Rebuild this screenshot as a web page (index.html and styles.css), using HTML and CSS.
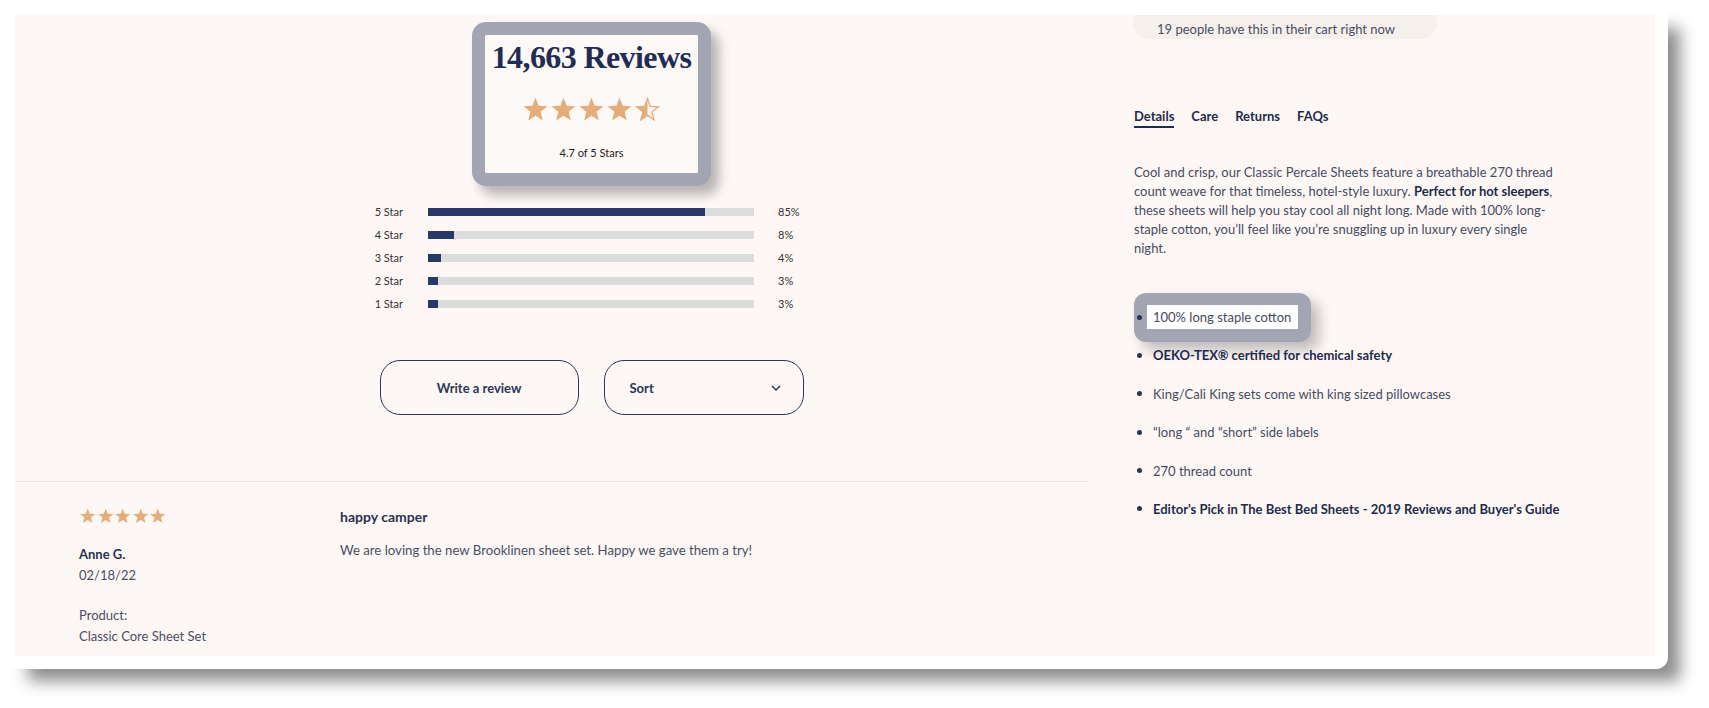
FILE: index.html
```html
<!DOCTYPE html>
<html lang="en">
<head>
<meta charset="utf-8">
<title>Reviews</title>
<link rel="stylesheet" href="styles.css">
</head>
<body>
<svg class="svg-defs" aria-hidden="true">
  <defs>
    <clipPath id="left-half"><rect x="0" y="0" width="12" height="23"/></clipPath>
  </defs>
  <symbol id="star" viewBox="0 0 24 23">
    <polygon points="12,0.6 14.9,8.1 23,8.5 16.7,13.6 18.8,21.7 12,17.2 5.2,21.7 7.3,13.6 1,8.5 9.1,8.1"/>
  </symbol>
  <symbol id="star-half" viewBox="0 0 24 23">
    <polygon points="12,1.4 14.5,8.6 22,9 16.1,13.7 18,21 12,16.9 6,21 7.9,13.7 2,9 9.5,8.6" fill="none" stroke="#e6ad78" stroke-width="1.2"/>
    <polygon clip-path="url(#left-half)" points="12,0.6 14.9,8.1 23,8.5 16.7,13.6 18.8,21.7 12,17.2 5.2,21.7 7.3,13.6 1,8.5 9.1,8.1"/>
  </symbol>
</svg>

<div class="frame">
  <div class="page">
    <section class="reviews">
      <div class="summary">
        <div class="score-box">
          <h2 class="score-title">14,663 Reviews</h2>
          <div class="stars stars-lg">
            <svg><use href="#star"/></svg>
            <svg><use href="#star"/></svg>
            <svg><use href="#star"/></svg>
            <svg><use href="#star"/></svg>
            <svg><use href="#star-half"/></svg>
          </div>
          <p class="score-sub">4.7 of 5 Stars</p>
        </div>

        <div class="dist">
          <div class="dist-row"><span class="dist-label">5 Star</span><div class="track"><div class="fill" style="width:85%"></div></div><span class="dist-pct">85%</span></div>
          <div class="dist-row"><span class="dist-label">4 Star</span><div class="track"><div class="fill" style="width:8%"></div></div><span class="dist-pct">8%</span></div>
          <div class="dist-row"><span class="dist-label">3 Star</span><div class="track"><div class="fill" style="width:4%"></div></div><span class="dist-pct">4%</span></div>
          <div class="dist-row"><span class="dist-label">2 Star</span><div class="track"><div class="fill" style="width:3%"></div></div><span class="dist-pct">3%</span></div>
          <div class="dist-row"><span class="dist-label">1 Star</span><div class="track"><div class="fill" style="width:3%"></div></div><span class="dist-pct">3%</span></div>
        </div>

        <div class="actions">
          <button class="btn btn-write" type="button">Write a review</button>
          <button class="btn btn-sort" type="button">
            <span>Sort</span>
            <svg class="chevron" viewBox="0 0 10 6"><polyline points="1,1 5,5 9,1"/></svg>
          </button>
        </div>
      </div>

      <article class="review">
        <div class="review-meta">
          <div class="stars stars-sm">
            <svg><use href="#star"/></svg>
            <svg><use href="#star"/></svg>
            <svg><use href="#star"/></svg>
            <svg><use href="#star"/></svg>
            <svg><use href="#star"/></svg>
          </div>
          <div class="reviewer">Anne G.</div>
          <div class="meta-line">02/18/22</div>
          <div class="meta-line product-label">Product:</div>
          <div class="meta-line">Classic Core Sheet Set</div>
        </div>
        <div class="review-body">
          <h3 class="review-title">happy camper</h3>
          <p class="review-text">We are loving the new Brooklinen sheet set. Happy we gave them a try!</p>
        </div>
      </article>
    </section>

    <aside class="details">
      <div class="cart-pill">19 people have this in their cart right now</div>

      <nav class="tabs">
        <span class="tab active">Details</span>
        <span class="tab">Care</span>
        <span class="tab">Returns</span>
        <span class="tab">FAQs</span>
      </nav>

      <p class="desc">Cool and crisp, our Classic Percale Sheets feature a breathable 270 thread count weave for that timeless, hotel-style luxury. <strong>Perfect for hot sleepers</strong>, these sheets will help you stay cool all night long. Made with 100% long-staple cotton, you’ll feel like you’re snuggling up in luxury every single night.</p>

      <ul class="features">
        <li class="hl"><span class="hl-text">100% long staple cotton</span></li>
        <li class="bold">OEKO-TEX® certified for chemical safety</li>
        <li>King/Cali King sets come with king sized pillowcases</li>
        <li>“long “ and “short” side labels</li>
        <li>270 thread count</li>
        <li class="bold">Editor's Pick in The Best Bed Sheets - 2019 Reviews and Buyer's Guide</li>
      </ul>
    </aside>
  </div>
</div>
</body>
</html>
```
FILE: styles.css
```css
html, body {
  margin: 0;
  padding: 0;
  background: #ffffff;
}

body {
  font-family: Lato, "Liberation Sans", sans-serif;
  color: #474b60;
  width: 1709px;
  height: 708px;
  overflow: hidden;
}

.svg-defs {
  position: absolute;
  width: 0;
  height: 0;
  overflow: hidden;
}

.frame {
  width: 1668px;
  height: 669px;
  box-sizing: border-box;
  padding: 15px 13px 13px 15px;
  background: #ffffff;
  border-radius: 0 0 12px 12px;
  box-shadow: 20px 20px 16px -8px rgba(0, 0, 0, 0.45);
}

.page {
  height: 100%;
  background: #fdf8f6;
  display: flex;
  overflow: hidden;
}

/* ---------- Left: reviews ---------- */
.reviews {
  width: 1072px;
  flex: none;
}

.summary {
  margin: 7px 0 0 338px;
  width: 477px;
  display: flex;
  flex-direction: column;
  align-items: center;
}

.score-box {
  width: 239px;
  height: 164px;
  box-sizing: border-box;
  border: 13px solid #a3a5b2;
  border-radius: 14px;
  background: #fdf9f7;
  box-shadow: 8px 9px 12px rgba(0, 0, 0, 0.28);
  text-align: center;
  padding-top: 4px;
}

.score-title {
  margin: 0;
  font-family: "Liberation Serif", "DejaVu Serif", serif;
  font-weight: 700;
  font-size: 32px;
  line-height: 37px;
  color: #1f2c55;
  letter-spacing: -0.6px;
  white-space: nowrap;
}

.stars {
  display: flex;
  fill: #e6ad78;
}

.stars-lg {
  margin-top: 21px;
  justify-content: center;
  gap: 1px;
}

.stars-lg svg {
  width: 27px;
  height: 25px;
}

.score-sub {
  margin: 24px 0 0;
  font-size: 11px;
  line-height: 14px;
  color: #222222;
}

.dist {
  margin-top: 14px;
  width: 100%;
}

.dist-row {
  display: flex;
  align-items: center;
  height: 23px;
  font-size: 11px;
  color: #333333;
}

.dist-label {
  width: 50px;
  text-align: right;
}

.track {
  width: 326px;
  height: 8px;
  margin-left: 25px;
  background: #dcdcdc;
}

.fill {
  height: 100%;
  background: #27396b;
}

.dist-pct {
  margin-left: 24px;
}

.actions {
  margin-top: 45px;
  display: flex;
  gap: 25px;
}

.btn {
  height: 55px;
  box-sizing: border-box;
  border: 1px solid #2b3658;
  border-radius: 20px;
  background: transparent;
  font-family: Lato, "Liberation Sans", sans-serif;
  font-weight: 700;
  font-size: 13px;
  color: #2b3658;
  padding: 0;
}

.btn-write {
  width: 199px;
}

.btn-sort {
  width: 200px;
  display: flex;
  align-items: center;
  justify-content: space-between;
  padding: 0 22px 0 25px;
}

.chevron {
  width: 10px;
  height: 6px;
  fill: none;
  stroke: #2b3658;
  stroke-width: 1.5;
}

.review {
  margin-top: 66px;
  border-top: 1px solid #ebe5e2;
  padding: 26px 0 0 64px;
  display: flex;
}

.review-meta {
  width: 261px;
  flex: none;
}

.stars-sm {
  height: 16px;
}

.stars-sm svg {
  width: 17.5px;
  height: 16px;
}

.reviewer {
  margin-top: 20px;
  font-weight: 700;
  font-size: 13px;
  line-height: 21px;
  color: #2a3150;
}

.meta-line {
  font-size: 13px;
  line-height: 21px;
  color: #4a4e63;
}

.product-label {
  margin-top: 19px;
}

.review-title {
  margin: 0;
  font-weight: 700;
  font-size: 14px;
  line-height: 18px;
  color: #2a3150;
}

.review-text {
  margin: 14px 0 0;
  font-size: 13.2px;
  line-height: 20px;
  color: #4a4e63;
}

/* ---------- Right: product details ---------- */
.details {
  flex: 1;
  padding-left: 47px;
}

.cart-pill {
  width: 304px;
  box-sizing: border-box;
  margin: -8px 0 0 -1px;
  padding: 12px 24px 0;
  line-height: 20px;
  background: #f5f0eb;
  border-radius: 16px;
  font-size: 13px;
  color: #4a4e63;
}

.tabs {
  margin-top: 68px;
  display: flex;
  gap: 17px;
}

.tab {
  font-weight: 700;
  font-size: 13px;
  line-height: 18px;
  color: #1f2b4d;
  padding-bottom: 1px;
  border-bottom: 2px solid transparent;
}

.tab.active {
  border-bottom-color: #1f2b4d;
}

.desc {
  margin: 35px 0 0;
  width: 422px;
  font-size: 13px;
  line-height: 19px;
  color: #474b60;
}

.desc strong {
  color: #1f2b4d;
}

.features {
  list-style: none;
  margin: 47px 0 0;
  padding: 0;
  display: flex;
  flex-direction: column;
  align-items: flex-start;
  gap: 14.4px;
}

.features li {
  display: flex;
  align-items: center;
  height: 24px;
  font-size: 13px;
  color: #474b60;
}

.features li::before {
  content: "";
  width: 5px;
  height: 5px;
  border-radius: 50%;
  background: #2b3350;
  margin: 0 11px 0 3px;
  flex: none;
}

.features li.bold {
  font-weight: 700;
  color: #1f2b4d;
}

.features li.hl {
  height: auto;
  margin: -12px 0 -13px;
  padding: 12px 13px 13px 0;
  background: #a3a5b2;
  border-radius: 12px;
  box-shadow: 8px 8px 14px rgba(0, 0, 0, 0.25);
}

.features li.hl::before {
  margin-right: 5px;
}

.hl-text {
  background: #ffffff;
  line-height: 24px;
  padding: 0 7px 0 6px;
}
```
